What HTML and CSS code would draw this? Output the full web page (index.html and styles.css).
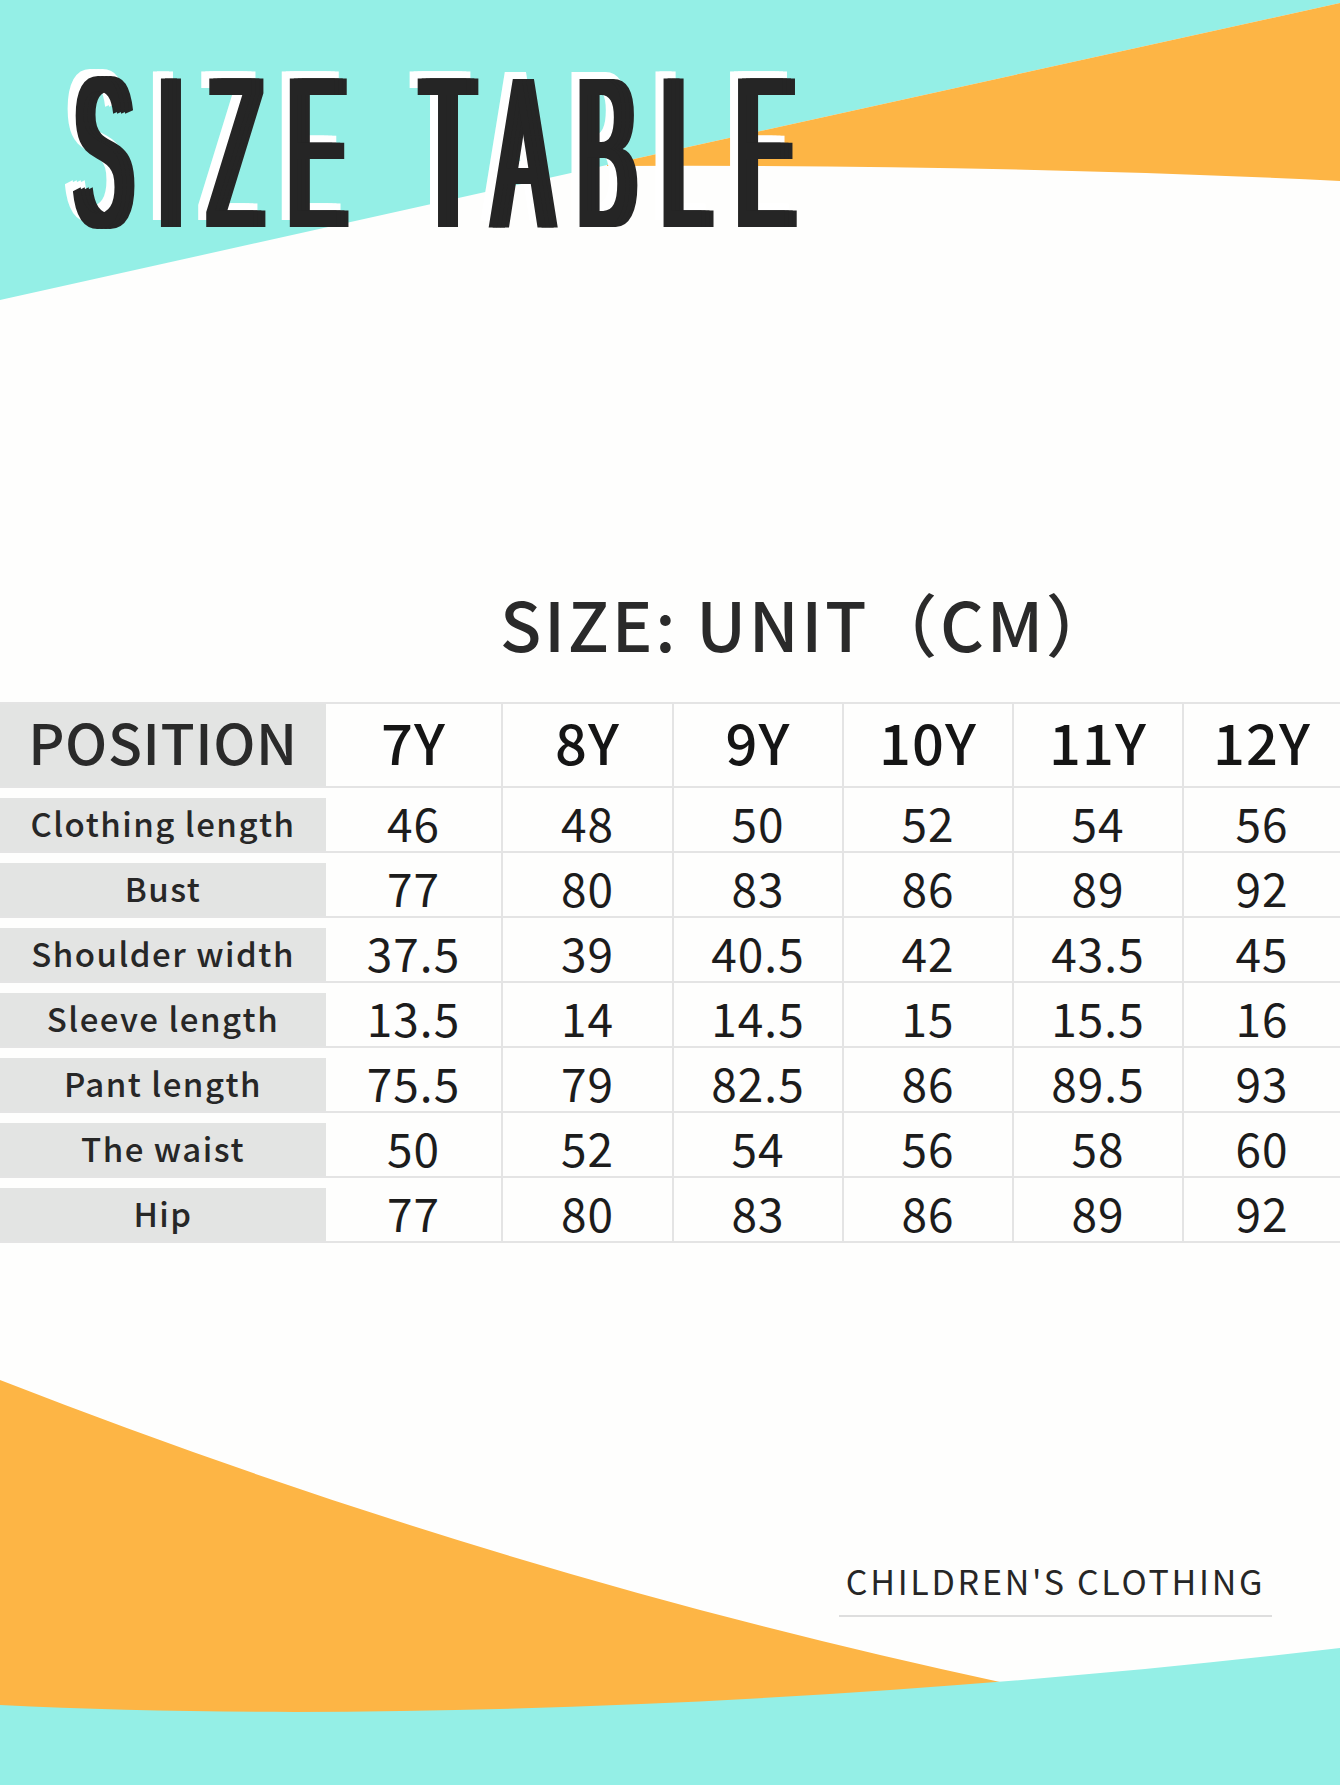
FILE: index.html
```html
<!DOCTYPE html>
<html lang="en">
<head>
<meta charset="utf-8">
<title>Size Table</title>
<link rel="stylesheet" href="styles.css">
</head>
<body>
<div class="page">
  <svg class="bg" viewBox="0 0 1340 1785" width="1340" height="1785" aria-hidden="true">
    <polygon class="cyan" points="0,0 1340,0 1340,3 607,165 0,300"/>
    <path class="orange" d="M607,165 L1340,3 L1340,181 Q1000,164 607,166 Z"/>
    <path class="orange" d="M0,1380 Q500,1575 1000,1682 L1340,1682 L1340,1785 L0,1785 Z"/>
    <path class="cyan" d="M0,1705 C400,1725 900,1700 1340,1648 L1340,1785 L0,1785 Z"/>
  </svg>
  <div class="content">
    <h1 class="title"><span class="title-text">SIZE TABLE</span></h1>
    <h2 class="unit">SIZE: UNIT（CM）</h2>
    <div class="table">
      <div class="cell head label"><span>POSITION</span></div>
      <div class="cell head num first">7Y</div>
      <div class="cell head num">8Y</div>
      <div class="cell head num">9Y</div>
      <div class="cell head num">10Y</div>
      <div class="cell head num">11Y</div>
      <div class="cell head num">12Y</div>

      <div class="cell label"><span>Clothing length</span></div>
      <div class="cell num first">46</div>
      <div class="cell num">48</div>
      <div class="cell num">50</div>
      <div class="cell num">52</div>
      <div class="cell num">54</div>
      <div class="cell num">56</div>

      <div class="cell label"><span>Bust</span></div>
      <div class="cell num first">77</div>
      <div class="cell num">80</div>
      <div class="cell num">83</div>
      <div class="cell num">86</div>
      <div class="cell num">89</div>
      <div class="cell num">92</div>

      <div class="cell label"><span>Shoulder width</span></div>
      <div class="cell num first">37.5</div>
      <div class="cell num">39</div>
      <div class="cell num">40.5</div>
      <div class="cell num">42</div>
      <div class="cell num">43.5</div>
      <div class="cell num">45</div>

      <div class="cell label"><span>Sleeve length</span></div>
      <div class="cell num first">13.5</div>
      <div class="cell num">14</div>
      <div class="cell num">14.5</div>
      <div class="cell num">15</div>
      <div class="cell num">15.5</div>
      <div class="cell num">16</div>

      <div class="cell label"><span>Pant length</span></div>
      <div class="cell num first">75.5</div>
      <div class="cell num">79</div>
      <div class="cell num">82.5</div>
      <div class="cell num">86</div>
      <div class="cell num">89.5</div>
      <div class="cell num">93</div>

      <div class="cell label"><span>The waist</span></div>
      <div class="cell num first">50</div>
      <div class="cell num">52</div>
      <div class="cell num">54</div>
      <div class="cell num">56</div>
      <div class="cell num">58</div>
      <div class="cell num">60</div>

      <div class="cell label"><span>Hip</span></div>
      <div class="cell num first">77</div>
      <div class="cell num">80</div>
      <div class="cell num">83</div>
      <div class="cell num">86</div>
      <div class="cell num">89</div>
      <div class="cell num">92</div>
    </div>
    <div class="footer"><span>CHILDREN'S CLOTHING</span></div>
  </div>
</div>
</body>
</html>
```
FILE: styles.css
```css
* { box-sizing: border-box; }
html, body { margin: 0; padding: 0; }
body { background: #fefefd; }

.page {
  position: relative;
  width: 1340px;
  height: 1785px;
  overflow: hidden;
  background: #fefefd;
  font-family: "Noto Sans CJK SC", "Noto Sans", sans-serif;
  color: #262626;
}

.bg {
  position: absolute;
  left: 0;
  top: 0;
  display: block;
}
.bg .cyan { fill: #94efe6; }
.bg .orange { fill: #fdb545; }

.content {
  position: relative;
  display: flex;
  flex-direction: column;
}

.title {
  margin: 44px 0 0 0;
  padding-left: 69px;
  height: 216px;
  font-family: "Liberation Sans", Arial, sans-serif;
  font-weight: 400;
  font-size: 216px;
  line-height: 216px;
  white-space: nowrap;
  overflow: visible;
}

.title-text {
  display: inline-block;
  letter-spacing: 67px;
  color: #252525;
  transform: scaleX(0.398);
  transform-origin: 0 0;
  text-shadow:
    10px 0 0 #252525,
    20px 0 0 #252525,
    30px 0 0 #252525,
    -20px -7px 0 #ffffff,
    -10px -7px 0 #ffffff,
    0 -7px 0 #ffffff,
    10px -7px 0 #ffffff;
}

.unit {
  margin: 329px 0 0 500px;
  font-size: 68px;
  line-height: 68px;
  font-weight: 500;
  letter-spacing: 2.7px;
  color: #2a2a2a;
  white-space: nowrap;
}

.table {
  margin-top: 45px;
  display: grid;
  grid-template-columns: 326px 175px 171px 170px 170px 170px 158px;
  grid-template-rows: 84px repeat(7, 65px);
  border-top: 2px solid #e4e4e4;
}

.cell {
  border-bottom: 2px solid #e4e4e4;
  display: flex;
  align-items: center;
  justify-content: center;
}

.num {
  border-left: 2px solid #e4e4e4;
  font-size: 46px;
  font-weight: 400;
  letter-spacing: 1px;
  color: #1c1c1c;
  padding-top: 4px;
}
.num.first { border-left: none; }

.head.num {
  font-size: 56px;
  font-weight: 500;
  color: #151515;
  padding-top: 0;
  padding-bottom: 10px;
}

.label {
  padding-top: 10px;
  align-items: stretch;
}
.label span {
  flex: 1;
  background: #e3e4e3;
  display: flex;
  align-items: center;
  justify-content: center;
  font-size: 33px;
  font-weight: 500;
  letter-spacing: 1.5px;
  color: #272727;
  padding-bottom: 3px;
}

.head.label { padding-top: 0; }
.head.label span {
  font-size: 56px;
  letter-spacing: 0.6px;
  padding-bottom: 10px;
  color: #2a2a2a;
}

.footer {
  margin: 318px 0 0 839px;
  width: 433px;
  text-align: center;
  font-size: 34px;
  line-height: 40px;
  font-weight: 400;
  letter-spacing: 2.7px;
  color: #262626;
  padding-bottom: 14px;
  border-bottom: 2px solid #dedede;
  white-space: nowrap;
}
```
